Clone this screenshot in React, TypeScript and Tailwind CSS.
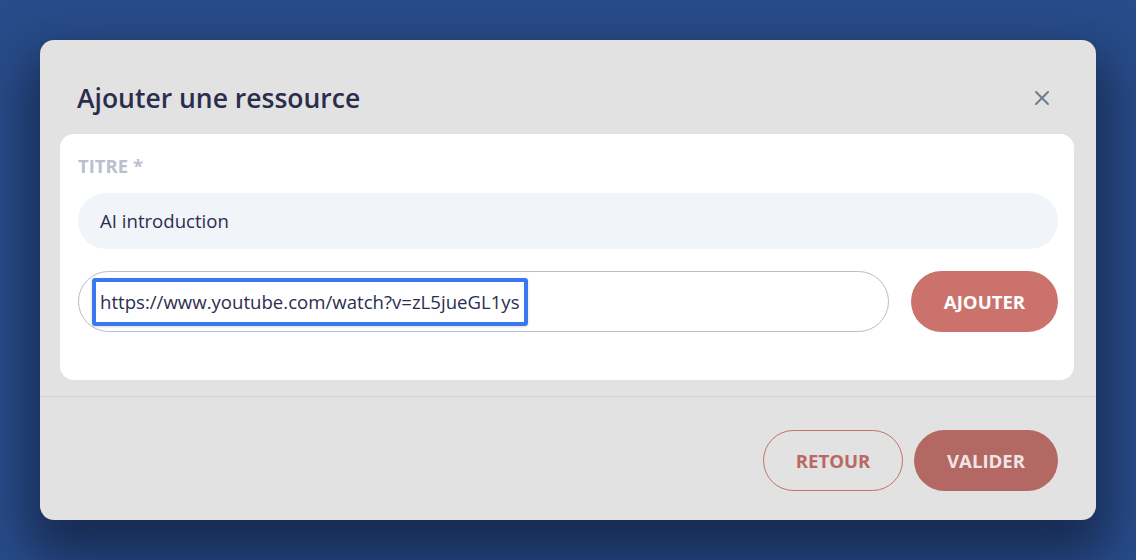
import React from "react";

export default function App() {
  return (
    <div
      className="w-[1136px] h-[560px] bg-[#284c8a] p-[40px] overflow-hidden"
      style={{ fontFamily: '"Open Sans", "Noto Sans", sans-serif' }}
    >
      <div className="w-[1056px] h-[480px] rounded-[14px] bg-[#e2e2e2] shadow-[0_26px_50px_12px_rgba(12,22,45,0.6)] flex flex-col">
        {/* header */}
        <div className="flex items-start justify-between pl-[37px] pr-[46px] pt-[40px] h-[94px]">
          <h2 className="text-[26.5px] leading-[36px] font-semibold text-[#2b2d4d]">
            Ajouter une ressource
          </h2>
          <svg
            width="16"
            height="16"
            viewBox="0 0 16 16"
            className="mt-[10px]"
            fill="none"
            stroke="#717d8c"
            strokeWidth="2"
            strokeLinecap="round"
          >
            <path d="M2 2 L14 14 M14 2 L2 14" />
          </svg>
        </div>

        {/* card */}
        <div className="ml-[20px] mr-[22px] h-[246px] rounded-[14px] bg-white pl-[18px] pr-[16px] pt-[19px]">
          <div className="text-[18.5px] leading-[26px] font-bold text-[#b9c0cc]">TITRE *</div>
          <div className="mt-[14px] h-[56px] rounded-full bg-[#f1f4f9] flex items-center pl-[22px] text-[18.6px] text-[#2c2e50]">
            AI introduction
          </div>
          <div className="mt-[22px] flex gap-[22px]">
            <div className="flex-1 h-[61px] rounded-full border border-[#b6bdcc] flex items-center pl-[13px]">
              <span className="h-[48px] flex items-center border-[4px] border-[#3a78f0] rounded-[3px] px-[4px] text-[18.6px] text-[#2c2e50] shadow-[0_1px_3px_rgba(0,0,0,0.15)]">
                https://www.youtube.com/watch?v=zL5jueGL1ys
              </span>
            </div>
            <button className="w-[147px] h-[61px] rounded-full bg-[#cc726d] text-white text-[18.6px] font-bold">
              AJOUTER
            </button>
          </div>
        </div>

        <div className="mt-[16px] h-px bg-[#cfcfd7]" />

        {/* footer */}
        <div className="flex justify-end gap-[11px] pr-[38px] pt-[33px]">
          <button className="w-[140px] h-[61px] rounded-full border border-[#c3716c] text-[#b96864] text-[18.6px] font-bold">
            RETOUR
          </button>
          <button className="w-[144px] h-[61px] rounded-full bg-[#b46863] text-[#efe5e5] text-[18.6px] font-bold">
            VALIDER
          </button>
        </div>
      </div>
    </div>
  );
}
